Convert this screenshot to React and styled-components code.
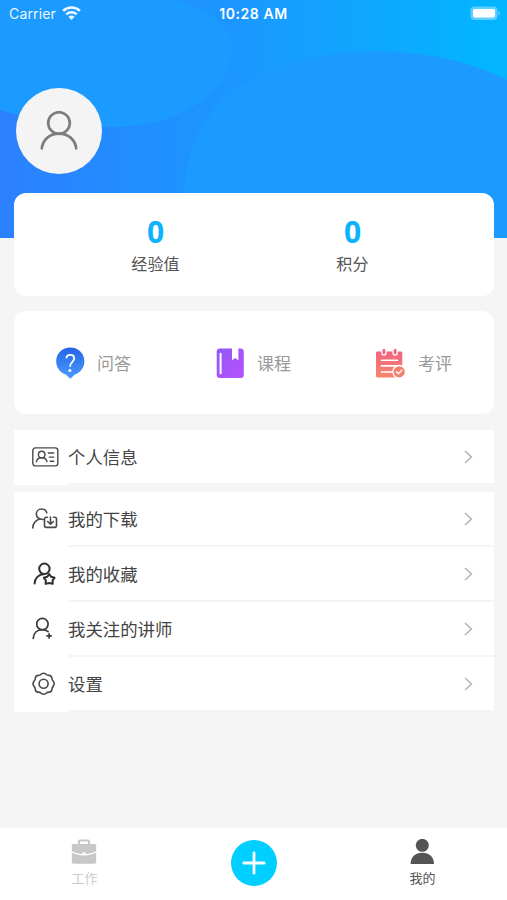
import React from 'react';
import styled, { createGlobalStyle } from 'styled-components';

const stats = [
  { label: '经验值', value: 0 },
  { label: '积分', value: 0 },
];

const shortcuts = [
  { label: '问答', icon: <QuestionIcon /> },
  { label: '课程', icon: <BookIcon /> },
  { label: '考评', icon: <ExamIcon /> },
];

const menu = [
  { label: '我的下载', icon: <DownloadIcon /> },
  { label: '我的收藏', icon: <FavoriteIcon /> },
  { label: '我关注的讲师', icon: <FollowIcon /> },
  { label: '设置', icon: <SettingIcon /> },
];

export default function App() {
  return (
    <Page>
      <GlobalStyle />
      <Header>
        <HeaderArt />
        <StatusBar>
          <Carrier>
            Carrier
            <WifiIcon />
          </Carrier>
          <Time>10:28 AM</Time>
          <Power>
            <BatteryIcon />
          </Power>
        </StatusBar>
        <Avatar>
          <AvatarIcon />
        </Avatar>
      </Header>
      <Content>
        <StatCard>
          {stats.map(({ label, value }) => (
            <Stat key={label}>
              <StatValue>{value}</StatValue>
              <StatLabel>{label}</StatLabel>
            </Stat>
          ))}
        </StatCard>
        <ShortcutCard>
          {shortcuts.map(({ label, icon }) => (
            <Shortcut key={label}>
              {icon}
              <span>{label}</span>
            </Shortcut>
          ))}
        </ShortcutCard>
        <MenuGroup>
          <MenuItem label="个人信息" icon={<ProfileIcon />} />
        </MenuGroup>
        <MenuGroup>
          {menu.map(({ label, icon }) => (
            <MenuItem key={label} label={label} icon={icon} />
          ))}
        </MenuGroup>
      </Content>
      <TabBar>
        <Tab>
          <WorkIcon />
          <span>工作</span>
        </Tab>
        <AddButton aria-label="add">
          <PlusIcon />
        </AddButton>
        <Tab $active>
          <MineIcon />
          <span>我的</span>
        </Tab>
      </TabBar>
    </Page>
  );
}

function MenuItem({ label, icon }) {
  return (
    <Row>
      <RowIcon>{icon}</RowIcon>
      <RowBody>
        <span>{label}</span>
        <svg width="10" height="14" viewBox="0 0 10 14" fill="none" stroke="#b5b5b5" strokeWidth="1.6">
          <path d="M1 1 7.4 7 1 13" />
        </svg>
      </RowBody>
    </Row>
  );
}

function HeaderArt() {
  return (
    <Art viewBox="0 0 507 238" preserveAspectRatio="none">
      <defs>
        <linearGradient id="sky" gradientUnits="userSpaceOnUse" x1="0" y1="0" x2="507" y2="0">
          <stop offset="0" stopColor="#2c80ff" />
          <stop offset="0.2" stopColor="#258aff" />
          <stop offset="0.36" stopColor="#1e92ff" />
          <stop offset="0.5" stopColor="#1a99ff" />
          <stop offset="0.66" stopColor="#12a3ff" />
          <stop offset="0.95" stopColor="#04b4ff" />
          <stop offset="1" stopColor="#04b4ff" />
        </linearGradient>
      </defs>
      <rect width="507" height="238" fill="url(#sky)" />
      <path d="M0 0H178C208 10 232 25 232 48C232 85 190 127 110 127C65 127 30 120 0 110z" fill="#1b9bff" />
      <path d="M182 238C180 150 200 105 260 75C295 58 335 51 375 51C425 51 472 62 507 80V238z" fill="#1b9bff" />
    </Art>
  );
}

function WifiIcon() {
  return (
    <svg width="19" height="14" viewBox="0 0 19 14" fill="none" stroke="#fff" strokeWidth="2.5">
      <path d="M1.1 4.9C5.9.4 13.1.4 17.9 4.9" />
      <path d="M4.2 8.4C7.2 5.6 11.8 5.6 14.8 8.4" />
      <path d="M9.5 13.9 6.4 10.8C8.2 9.2 10.8 9.2 12.6 10.8z" fill="#fff" stroke="none" />
    </svg>
  );
}

function BatteryIcon() {
  return (
    <svg width="31" height="15" viewBox="0 0 31 15">
      <rect x="0.5" y="0.5" width="27" height="13.5" rx="4" fill="#fff" fillOpacity="0.36" />
      <rect x="3" y="3" width="22" height="8.5" rx="2" fill="#fff" />
      <path d="M28.6 5C30.4 5.7 30.4 8.8 28.6 9.5z" fill="#fff" fillOpacity="0.45" />
    </svg>
  );
}

function AvatarIcon() {
  return (
    <svg width="40" height="40" viewBox="0 0 40 40" fill="none" stroke="#7d7d7d" strokeWidth="2.7" strokeLinecap="round">
      <circle cx="20" cy="12" r="10.8" />
      <path d="M2.8 37.3C4 28.3 10.8 22.7 20 22.7C29.2 22.7 36 28.3 37.2 37.3" />
    </svg>
  );
}

function QuestionIcon() {
  return (
    <svg width="29" height="32" viewBox="0 0 29 32">
      <defs>
        <linearGradient id="ask" x1="0" y1="0" x2="0" y2="1">
          <stop offset="0" stopColor="#2464e8" />
          <stop offset="1" stopColor="#4b9bff" />
        </linearGradient>
      </defs>
      <path d="M14.3.5C22.2.5 28.4 6.6 28.4 14.2C28.4 20.6 24.4 25.6 18.9 27.4L14.3 31.7 9.7 27.4C4.2 25.6.2 20.6.2 14.2C.2 6.6 6.4.5 14.3.5z" fill="url(#ask)" />
      <path d="M10.3 11.4C10.5 8.8 12.2 7.8 14.3 7.8C16.7 7.8 18.2 9.3 18.2 11.3C18.2 14.6 14.2 14.8 14.1 19.8" fill="none" stroke="#fff" strokeWidth="1.8" />
      <circle cx="13.9" cy="23.5" r="1.5" fill="#fff" />
    </svg>
  );
}

function BookIcon() {
  return (
    <svg width="29" height="32" viewBox="0 0 29 32">
      <defs>
        <linearGradient id="book" x1="0" y1="0" x2="1" y2="1">
          <stop offset="0" stopColor="#8f57fa" />
          <stop offset="0.5" stopColor="#a655fa" />
          <stop offset="1" stopColor="#b352fb" />
        </linearGradient>
      </defs>
      <path d="M3.7 1.4H16V13.2L19.2 10.9 22.4 13.2V1.4H24.8C26.5 1.4 27.8 2.7 27.8 4.4V28C27.8 29.7 26.5 31 24.8 31H3.7C2 31 .7 29.7 .7 28V4.4C.7 2.7 2 1.4 3.7 1.4z" fill="url(#book)" />
      <path d="M4.6 6.7V26.2" stroke="#fff" strokeWidth="2" strokeLinecap="round" />
    </svg>
  );
}

function ExamIcon() {
  return (
    <svg width="30" height="32" viewBox="0 0 30 32">
      <defs>
        <linearGradient id="exam" x1="0" y1="0" x2="0" y2="1">
          <stop offset="0" stopColor="#f2647f" />
          <stop offset="1" stopColor="#f5876c" />
        </linearGradient>
      </defs>
      <path d="M1.8 4.6H24.8C25.7 4.6 26.3 5.3 26.3 6.2V30.4H1.4C.6 30.4 0 29.9 0 29.1V6C0 5.2.8 4.6 1.8 4.6z" fill="url(#exam)" />
      <g fill="#f2647f" stroke="#fff" strokeWidth="1.3">
        <rect x="5.8" y="1.2" width="4.2" height="7" rx="2.1" />
        <rect x="17" y="1.2" width="4.2" height="7" rx="2.1" />
      </g>
      <path d="M5.4 13.2H21.5M5.4 18.9H21.5M5.4 25H16" stroke="#fff" strokeWidth="1.6" strokeLinecap="round" />
      <circle cx="23.2" cy="24.8" r="6.3" fill="#f2826c" stroke="#fff" strokeWidth="1.4" />
      <path d="M20.2 24.6 22.5 26.8 26.3 22.8" fill="none" stroke="#fff" strokeWidth="1.4" />
    </svg>
  );
}

function ProfileIcon() {
  return (
    <svg width="27" height="20" viewBox="0 0 27 20" fill="none" stroke="#4a4a4a" strokeWidth="1.4" strokeLinecap="round">
      <rect x="0.8" y="0.9" width="25" height="18" rx="2.6" />
      <circle cx="9.7" cy="7.5" r="3.3" />
      <path d="M4.4 14.7C5 12.1 7 10.8 9.7 10.8C12.4 10.8 14.4 12.1 15 14.7" />
      <path d="M16.3 6H21.7M17.3 10.1H21.7M18.2 14.2H21.7" />
    </svg>
  );
}

function DownloadIcon() {
  return (
    <svg width="27" height="22" viewBox="0 0 27 22" fill="none" stroke="#4a4a4a" strokeWidth="1.6" strokeLinecap="round" strokeLinejoin="round">
      <path d="M11.4 11.5C7 11.8 4.3 8.9 4.3 6.2C4.3 3.3 6.6 1 9.6 1C12.1 1 14.1 2.6 14.8 4.8" />
      <path d="M7.6 11.1C3.6 12.5 1 15.8.8 19.9" />
      <path d="M15.4 9.3H14.2C13.1 9.3 12.5 9.9 12.5 11V17.6C12.5 18.8 13.1 19.4 14.2 19.4H22.8C23.9 19.4 24.5 18.8 24.5 17.6V11C24.5 9.9 23.9 9.3 22.8 9.3H21.6" />
      <path d="M18.5 9V16M15.6 13.5 18.5 16.2 21.4 13.5" />
    </svg>
  );
}

function FavoriteIcon() {
  return (
    <svg width="27" height="24" viewBox="0 0 27 24" fill="none" stroke="#303030" strokeWidth="2" strokeLinecap="round" strokeLinejoin="round">
      <circle cx="12.4" cy="6.8" r="5.2" />
      <path d="M2.6 21.5C2.8 16.2 6.6 12.3 12.4 12.1" />
      <path d="M17.2 12 19.2 14.8 22.6 15.6 20.6 18.4 20.7 21.9 17.2 21 13.7 21.9 13.8 18.4 11.8 15.6 15.2 14.8z" />
    </svg>
  );
}

function FollowIcon() {
  return (
    <svg width="27" height="24" viewBox="0 0 27 24" fill="none" stroke="#3c3c3c" strokeWidth="1.7" strokeLinecap="round">
      <circle cx="10.4" cy="7.1" r="5.7" />
      <path d="M1.2 21.4C1.5 16.4 5 12.8 10.4 12.7C12.8 12.7 14.6 13.4 16.1 14.6" />
      <path d="M17.1 16.8V21M15 18.9H19.2" />
    </svg>
  );
}

function SettingIcon() {
  return (
    <svg width="27" height="24" viewBox="0 0 27 24" fill="none" stroke="#4a4a4a" strokeWidth="1.6" strokeLinejoin="round">
      <path d="M9.2 2.2Q11.6.4 14 2.2Q15.3 3.5 17.2 3.4Q19.7 3.8 19.9 6.2Q20 8 21.3 9.3Q23 11.7 21.3 14.1Q20 15.5 19.9 17.3Q19.6 19.8 17.2 20.1Q15.3 20 14 21.3Q11.6 23.1 9.2 21.3Q7.9 20 6 20.1Q3.6 19.8 3.3 17.3Q3.2 15.5 1.9 14.1Q.2 11.7 1.9 9.3Q3.2 8 3.3 6.2Q3.6 3.8 6 3.4Q7.9 3.5 9.2 2.2z" />
      <circle cx="11.6" cy="11.8" r="4.5" />
    </svg>
  );
}

function WorkIcon() {
  return (
    <svg width="26" height="26" viewBox="0 0 26 26" fill="#c8c8c8">
      <path d="M6.8 5.5V2.6C6.8 1.2 7.5.5 8.8.5H17.2C18.5.5 19.2 1.2 19.2 2.6V5.5H17V2.6H9V5.5z" />
      <path d="M2.4 5H23.6C24.6 5 25.2 5.6 25.2 6.6V12.2C21.2 14.3 17 15.2 13 15.2C9 15.2 4.8 14.3.8 12.2V6.6C.8 5.6 1.4 5 2.4 5z" />
      <path d="M.8 13.6C4.8 15.6 9 16.6 13 16.6C17 16.6 21.2 15.6 25.2 13.6V22.8C25.2 24 24.6 24.7 23.4 24.7H2.6C1.4 24.7.8 24 .8 22.8z" />
      <rect x="11.2" y="13.6" width="4" height="1.5" rx="0.7" fill="#fff" />
    </svg>
  );
}

function MineIcon() {
  return (
    <svg width="26" height="26" viewBox="0 0 26 26" fill="#545454">
      <circle cx="13.3" cy="6.3" r="6.5" />
      <path d="M1.6 24.9C1.6 18 6.3 13.7 13.3 13.7C20.3 13.7 25 18 25 24.9z" />
    </svg>
  );
}

function PlusIcon() {
  return (
    <svg width="24" height="24" viewBox="0 0 24 24" stroke="#fff" strokeWidth="2.8" strokeLinecap="round">
      <path d="M12 1.8V22.2M1.8 12H22.2" />
    </svg>
  );
}

const GlobalStyle = createGlobalStyle`
  * {
    box-sizing: border-box;
  }
  body {
    margin: 0;
    background: #f5f5f5;
    font-family: Inter, "Noto Sans CJK SC", sans-serif;
  }
  svg {
    display: block;
    flex-shrink: 0;
  }
`;

const Page = styled.div`
  width: 507px;
  height: 900px;
  display: flex;
  flex-direction: column;
  overflow: hidden;
  background: #f5f5f5;
`;

const Header = styled.header`
  position: relative;
  height: 238px;
  flex-shrink: 0;
`;

/* sits behind the status bar and the avatar */
const Art = styled.svg`
  position: absolute;
  inset: 0;
  width: 100%;
  height: 100%;
`;

const StatusBar = styled.div`
  position: relative;
  height: 27px;
  padding: 0 6px 0 9px;
  display: grid;
  grid-template-columns: 1fr auto 1fr;
  align-items: center;
  color: #fff;
`;

const Carrier = styled.div`
  display: flex;
  align-items: center;
  gap: 6px;
  font-size: 14px;
  letter-spacing: 0.15px;
  opacity: 0.92;
  svg {
    margin-top: -2px;
  }
`;

const Time = styled.div`
  margin-left: -3px;
  font-size: 14px;
  font-weight: 600;
  letter-spacing: 0.55px;
`;

const Power = styled.div`
  display: flex;
  justify-content: flex-end;
`;

const Avatar = styled.div`
  position: relative;
  width: 86px;
  height: 86px;
  margin: 60.5px 0 0 16px;
  display: flex;
  align-items: center;
  justify-content: center;
  border-radius: 50%;
  background: #f4f4f4;
`;

const Content = styled.main`
  position: relative;
  flex: 1;
  margin-top: -45px;
  padding: 0 13px 0 14px;
`;

const Card = styled.section`
  height: 103px;
  border-radius: 12px;
  background: #fff;
`;

const StatCard = styled(Card)`
  display: grid;
  grid-template-columns: 197px 197px;
  justify-content: center;
`;

const Stat = styled.div`
  display: flex;
  flex-direction: column;
  align-items: center;
  padding-top: 23px;
`;

const StatValue = styled.div`
  height: 32px;
  font-family: "Open Sans", "Noto Sans", sans-serif;
  font-size: 30px;
  font-weight: 700;
  line-height: 32px;
  color: #0cb2fb;
`;

const StatLabel = styled.div`
  margin-top: 4px;
  font-size: 16px;
  line-height: 24px;
  letter-spacing: 0.2px;
  color: #555;
`;

const ShortcutCard = styled(Card)`
  margin-top: 15px;
  display: grid;
  grid-template-columns: repeat(3, 1fr);
`;

const Shortcut = styled.div`
  display: flex;
  align-items: center;
  gap: 12px;
  padding-left: 42px;
  font-size: 17px;
  color: #999;
`;

const MenuGroup = styled.section`
  margin-top: 16px;
  background: #fff;
  & + & {
    margin-top: 7px;
  }
`;

const Row = styled.div`
  display: flex;
  height: 55px;
`;

const RowIcon = styled.div`
  width: 54px;
  padding: 0 0 2px 18px;
  display: flex;
  align-items: center;
`;

const RowBody = styled.div`
  flex: 1;
  display: flex;
  align-items: center;
  justify-content: space-between;
  padding-right: 20px;
  border-bottom: 2px solid #f5f5f5;
  font-size: 17.4px;
  color: #444;
  span {
    margin-top: -1px;
  }
`;

const TabBar = styled.nav`
  height: 72px;
  display: grid;
  grid-template-columns: repeat(3, 1fr);
  justify-items: center;
  background: #fff;
`;

const Tab = styled.div`
  display: flex;
  flex-direction: column;
  align-items: center;
  padding-top: 11px;
  font-size: 13px;
  line-height: 20px;
  color: ${({ $active }) => ($active ? '#555' : '#ccc')};
  span {
    margin-top: 3px;
  }
`;

const AddButton = styled.button`
  width: 46px;
  height: 46px;
  margin-top: 12px;
  padding: 0;
  display: flex;
  align-items: center;
  justify-content: center;
  border: none;
  border-radius: 50%;
  background: #00cfff;
  cursor: pointer;
`;
